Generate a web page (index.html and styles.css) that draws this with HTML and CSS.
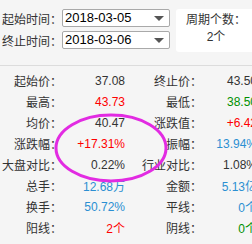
FILE: index.html
```html
<!DOCTYPE html>
<html lang="zh-CN">
<head>
    <meta charset="UTF-8">
    <title>区间统计</title>
    <link rel="stylesheet" href="styles.css">
</head>
<body>
    <div class="page">
        <div class="top">
            <div class="range">
                <div class="field">
                    <span class="field-label">起始时间：</span>
                    <div class="dropdown">2018-03-05<span class="arrow"></span></div>
                </div>
                <div class="field">
                    <span class="field-label">终止时间：</span>
                    <div class="dropdown">2018-03-06<span class="arrow"></span></div>
                </div>
            </div>
            <div class="period">
                <div>周期个数：</div>
                <div>2个</div>
            </div>
        </div>

        <div class="divider"></div>

        <div class="stats">
            <span class="label">起始价：</span><span class="value">37.08</span>
            <span class="label">终止价：</span><span class="value">43.50</span>

            <span class="label">最高：</span><span class="value up">43.73</span>
            <span class="label">最低：</span><span class="value down">38.50</span>

            <span class="label">均价：</span><span class="value">40.47</span>
            <span class="label">涨跌值：</span><span class="value up">+6.42</span>

            <span class="label">涨跌幅：</span><span class="value up">+17.31%</span>
            <span class="label">振幅：</span><span class="value info">13.94%</span>

            <span class="label">大盘对比：</span><span class="value">0.22%</span>
            <span class="label">行业对比：</span><span class="value">1.08%</span>

            <span class="label">总手：</span><span class="value info">12.68万</span>
            <span class="label">金额：</span><span class="value info">5.13亿</span>

            <span class="label">换手：</span><span class="value info">50.72%</span>
            <span class="label">平线：</span><span class="value info">0个</span>

            <span class="label">阳线：</span><span class="value up">2个</span>
            <span class="label">阴线：</span><span class="value down">0个</span>
        </div>

        <svg class="mark" width="120" height="76" viewBox="0 0 120 76">
            <ellipse cx="58" cy="36" rx="55" ry="33" fill="none" stroke="#e22be2" stroke-width="3"/>
        </svg>
    </div>
</body>
</html>
```

FILE: styles.css
```css
* {
    margin: 0;
    padding: 0;
    box-sizing: border-box;
}

body {
    background: #f5f5f5;
    font-family: "Liberation Sans", "Noto Sans CJK SC", sans-serif;
    font-size: 12px;
    color: #333;
    overflow: hidden;
}

.page {
    position: relative;
    width: 262px;
    padding-top: 9px;
}

.top {
    display: flex;
    align-items: flex-start;
    padding-left: 2px;
}

.range {
    display: flex;
    flex-direction: column;
    gap: 4px;
}

.field {
    display: flex;
    align-items: center;
    height: 18px;
}

.field-label {
    flex: 0 0 59px;
    white-space: nowrap;
}

.dropdown {
    position: relative;
    flex: 0 0 108px;
    height: 18px;
    border: 1px solid #a9a9a9;
    border-radius: 2px;
    background: white;
    color: #000;
    font-size: 13px;
    line-height: 16px;
    padding-left: 2px;
}

.arrow {
    position: absolute;
    right: 5px;
    top: 6px;
    border-left: 5px solid transparent;
    border-right: 5px solid transparent;
    border-top: 5px solid #555;
}

.period {
    margin-left: 6px;
    width: 80px;
    height: 43px;
    background: white;
    border-radius: 3px;
    text-align: center;
    padding-top: 3px;
    line-height: 17px;
    white-space: nowrap;
}

.divider {
    height: 1px;
    background: #dcdcdc;
    margin-top: 13px;
}

.stats {
    display: grid;
    grid-template-columns: 62px 63px 77px 55px;
    grid-auto-rows: 21px;
    align-items: center;
    margin-top: 4px;
    white-space: nowrap;
}

.label {
    text-align: right;
}

.value {
    text-align: right;
}

.up {
    color: #ff0000;
}

.down {
    color: #009000;
}

.info {
    color: #2b8fd2;
}

.mark {
    position: absolute;
    left: 53px;
    top: 112px;
}
```
